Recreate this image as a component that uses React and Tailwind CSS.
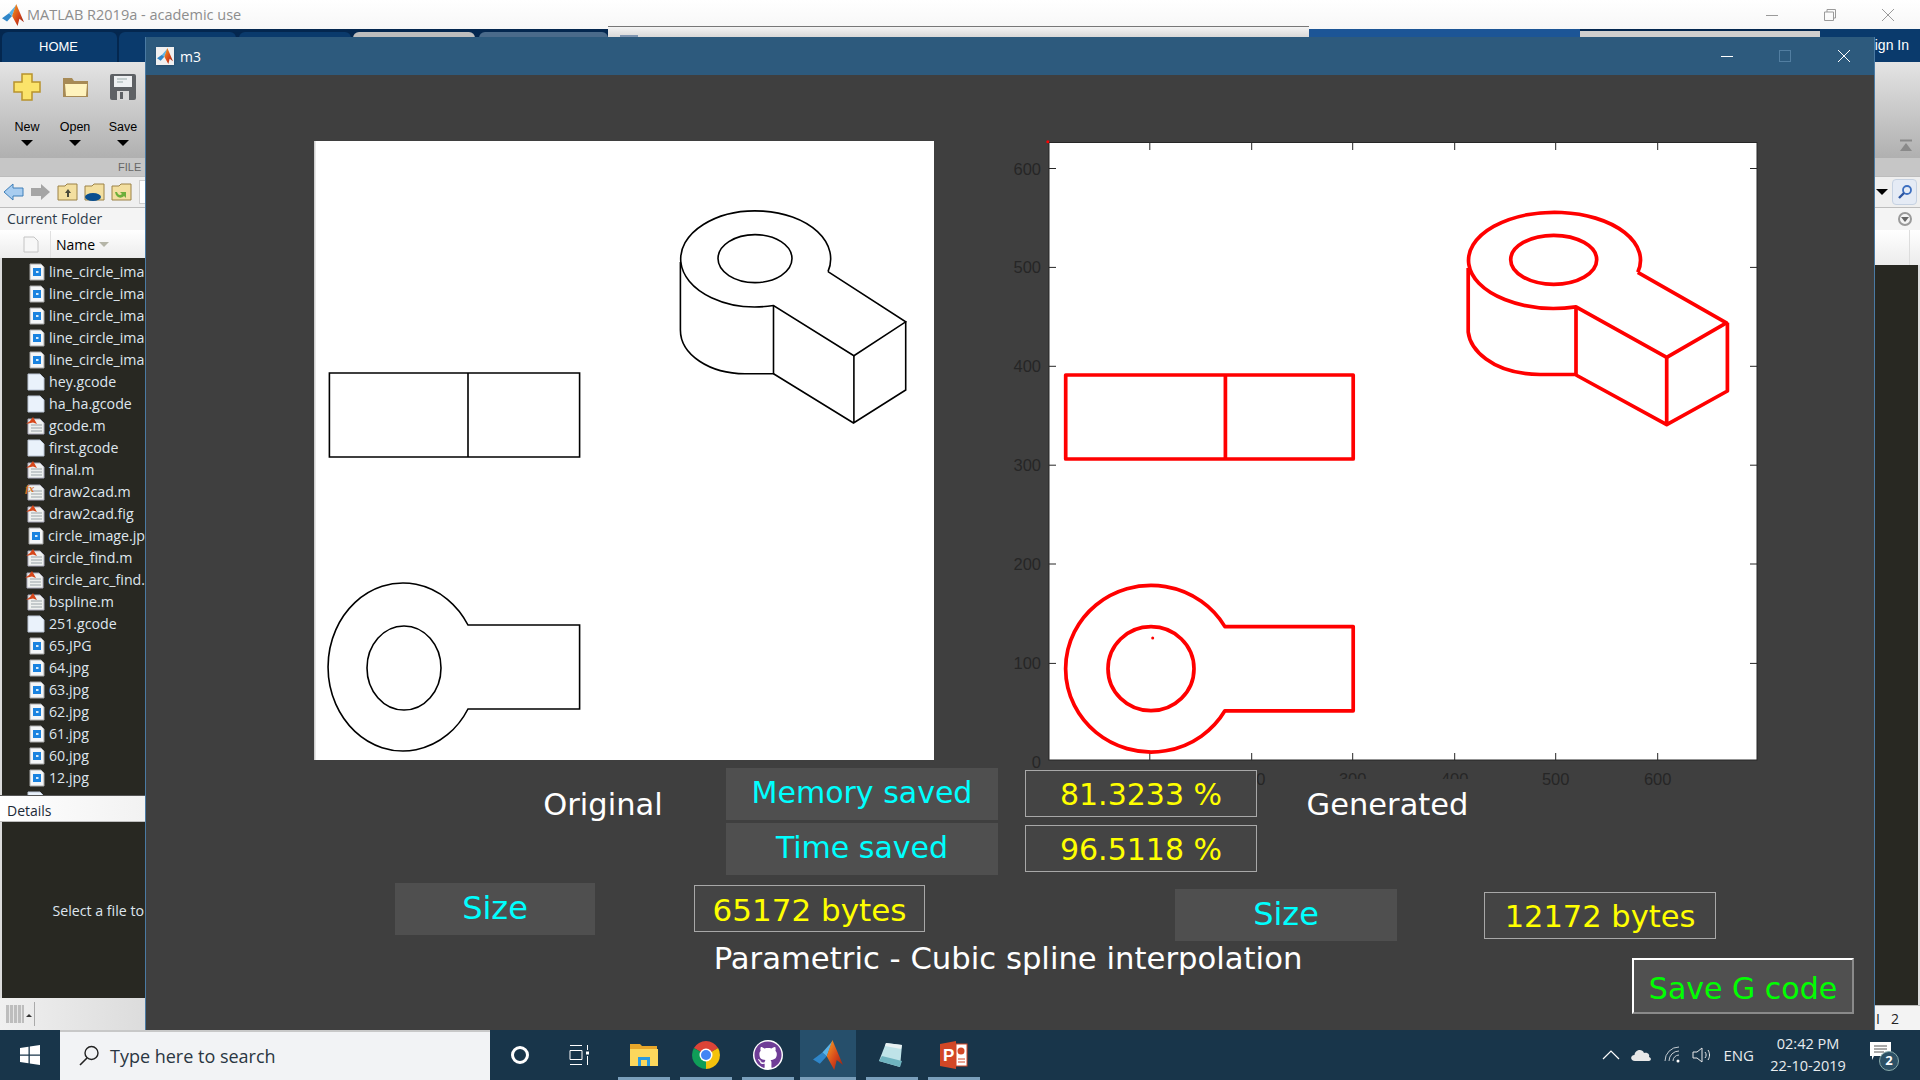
import React from "react";
import { FaGithub } from "react-icons/fa";

const comic = "font-['Comic_Sans_MS','DejaVu_Sans',cursive]";
const segoe = "font-['Open_Sans','Noto_Sans',sans-serif]";
const arial = "font-['Liberation_Sans',Arial,sans-serif]";

function MatlabLogo({ size = 24, id = "mlg" }) {
  return (
    <svg width={size} height={size} viewBox="0 0 24 24">
      <defs>
        <linearGradient id={id} x1="0" y1="0" x2="1" y2="1">
          <stop offset="0" stopColor="#f5a524" />
          <stop offset="0.55" stopColor="#d6461a" />
          <stop offset="1" stopColor="#8c1f12" />
        </linearGradient>
      </defs>
      <polygon points="0,15.5 7.5,10 11,13 5.5,19" fill="#2f86c9" />
      <polygon points="7.5,10 11,13 15.5,1" fill="#5ab4e8" />
      <polygon points="15.5,0 24,20 19,16 17,24 11,13" fill={`url(#${id})`} />
    </svg>
  );
}

function ImgIcon() {
  return (
    <svg width="16" height="18" viewBox="0 0 16 18">
      <path d="M1 1H12L15 4V17H1Z" fill="#f4f6f8" stroke="#a9a9a9" />
      <rect x="4" y="5" width="8" height="8" fill="#1a83e0" />
      <rect x="7" y="8" width="2.5" height="2" fill="#d8ecfb" />
    </svg>
  );
}
function DocIcon() {
  return (
    <svg width="18" height="18" viewBox="0 0 18 18">
      <path d="M1 1H13L17 5V17H1Z" fill="#eaf2fb" stroke="#bcc6d6" />
    </svg>
  );
}
function MIcon({ fx }) {
  return (
    <svg width="20" height="18" viewBox="0 0 20 18">
      <path d="M3 2H15L19 6V17H3Z" fill="#eef0ef" stroke="#aab" />
      <path d="M6 8H17M6 11H17M6 14H17" stroke="#9aa3a8" />
      {fx ? (
        <text x="0" y="9" fontSize="11" fontStyle="italic" fontWeight="700" fill="#d9731c" fontFamily="Liberation Serif">fx</text>
      ) : (
        <polygon points="1,7 5,4 8,0 12,7 8,5.5" fill="#d6461a" />
      )}
    </svg>
  );
}

const files = [
  ["line_circle_ima", "i"], ["line_circle_ima", "i"], ["line_circle_ima", "i"], ["line_circle_ima", "i"], ["line_circle_ima", "i"],
  ["hey.gcode", "d"], ["ha_ha.gcode", "d"], ["gcode.m", "m"], ["first.gcode", "d"], ["final.m", "m"],
  ["draw2cad.m", "f"], ["draw2cad.fig", "m"], ["circle_image.jp", "i"], ["circle_find.m", "m"], ["circle_arc_find.", "m"],
  ["bspline.m", "m"], ["251.gcode", "d"], ["65.JPG", "i"], ["64.jpg", "i"], ["63.jpg", "i"], ["62.jpg", "i"],
  ["61.jpg", "i"], ["60.jpg", "i"], ["12.jpg", "i"],
];

function FileRow({ name, t }) {
  return (
    <div className="flex h-[22px] shrink-0 items-center">
      <div className="flex w-[47px] justify-end pr-[4px]">
        {t === "i" && <ImgIcon />}
        {t === "d" && <DocIcon />}
        {t === "m" && <MIcon />}
        {t === "f" && <MIcon fx />}
      </div>
      <span className="whitespace-nowrap text-[14.2px] text-[#dfe6ee]">{name}</span>
    </div>
  );
}

function Caret() {
  return <div className="h-0 w-0 border-x-[6px] border-t-[6px] border-x-transparent border-t-black" />;
}

function RibbonBtn({ label, children, w }) {
  return (
    <div className={`flex flex-col items-center ${w}`}>
      <div className="flex h-[38px] items-center justify-center">{children}</div>
      <div className={`mt-[13px] text-[12.5px] leading-[16px] text-black ${arial}`}>{label}</div>
      <div className="mt-[5px]"><Caret /></div>
    </div>
  );
}

function LeftPanel() {
  return (
    <div className={`flex w-[145px] shrink-0 flex-col ${segoe}`}>
      <div className="flex h-[23px] items-center border-t border-[#bdbdbd] bg-[#f4f4f4] pb-[2px] pl-[7px] text-[14px] text-[#2d3b4a]">Current Folder</div>
      <div className="flex h-[28px] items-center bg-gradient-to-b from-[#ffffff] to-[#ececec]">
        <div className="flex w-[51px] justify-start border-r border-[#e0e0e0] py-[5px] pl-[23px]">
          <svg width="16" height="17" viewBox="0 0 16 17"><path d="M1 1H11L15 5V16H1Z" fill="#f7f7f7" stroke="#c4c4c4" /></svg>
        </div>
        <span className="ml-[5px] text-[14px] text-black">Name</span>
        <div className="ml-[4px] h-0 w-0 border-x-[5px] border-t-[5px] border-x-transparent border-t-[#b5b5a8]" />
      </div>
      <div className="flex h-[537px] flex-col overflow-hidden border-l-2 border-[#dcdcdc] bg-[#282822] pt-[3px]">
        {files.map((f, i) => <FileRow key={i} name={f[0]} t={f[1]} />)}
        <FileRow name="" t="d" />
      </div>
      <div className="flex h-[27px] items-center border-b border-t border-b-[#bdbdbd] border-t-[#555] bg-gradient-to-r from-[#ffffff] to-[#f2f2f2] pl-[7px] pt-[3px] text-[14px] text-[#1c2a38]">Details</div>
      <div className="flex h-[176px] items-center justify-end overflow-hidden whitespace-nowrap border-l-2 border-[#dcdcdc] bg-[#282822] pr-[1px] pt-[2px] text-[14.2px] text-[#dfe6ee]">Select a file to</div>
      <div className="flex h-[32px] items-center bg-gradient-to-r from-[#f0f0f0] to-[#dcdcdc] pl-[6px]">
        <div className="h-[18px] w-[18px] bg-[repeating-linear-gradient(90deg,#bdbdbd_0,#bdbdbd_3px,#e6e6e6_3px,#e6e6e6_4px)]" />
        <div className="ml-[2px] mt-[2px] h-0 w-0 border-x-[3px] border-b-[3px] border-x-transparent border-b-[#333]" />
        <div className="ml-[2px] h-[24px] w-px bg-[#aaa]" />
      </div>
    </div>
  );
}

function RightPanel() {
  return (
    <div className="flex w-[45px] shrink-0 flex-col">
      <div className="flex h-[23px] items-center justify-end border-t border-[#bdbdbd] bg-[#f4f4f4] pr-[8px]">
        <div className="flex h-[14px] w-[14px] items-center justify-center rounded-full border-2 border-[#9a9a9a]">
          <div className="h-0 w-0 border-x-[4px] border-t-[5px] border-x-transparent border-t-[#666]" />
        </div>
      </div>
      <div className="flex h-[35px] justify-end bg-gradient-to-b from-[#ffffff] to-[#ececec] pr-[10px]"><div className="h-full w-px bg-[#ddd]" /></div>
      <div className="h-[740px] border-r-2 border-[#dcdcdc] bg-[#282822]" />
      <div className={`flex h-[25px] items-center gap-[11px] border-t border-[#bbb] bg-[#f3f3f3] pl-[1px] text-[14px] text-[#222] ${segoe}`}>
        <span>I</span><span>2</span>
      </div>
    </div>
  );
}

function LeftDrawing() {
  return (
    <svg width="620" height="619" viewBox="314 141 620 619" className="block shrink-0 bg-white">
      <g fill="none" stroke="#000" strokeWidth="1.6">
        <path d="M329.4 373H579.6V457H329.4Z M468 373V457" />
        <path d="M579.6 625H468A75 84 0 1 0 468 709H579.6Z" />
        <ellipse cx="404" cy="668" rx="37" ry="42" />
        <path d="M828 271.6A75 48 0 1 0 773.5 305.5L853.9 355.7L905.7 321.8L828 271.6" />
        <ellipse cx="755" cy="258.6" rx="37" ry="24" />
        <path d="M680.4 262V330C680.4 355 710 373.7 745 373.7H773.5V305.5" />
        <path d="M773.5 373.7L853.5 423L905.7 390V321.8M853.9 355.7V423" />
      </g>
      <rect x="314" y="141" width="1.5" height="619" fill="#cfcfcf" />
    </svg>
  );
}

function Chart() {
  const xt = [[1149.8, ""], [1251.7, 200], [1352.7, 300], [1454.7, 400], [1555.7, 500], [1657.7, 600]];
  const yt = [[168.5, 600], [267.4, 500], [366.3, 400], [465.2, 300], [564, 200], [663.4, 100]];
  return (
    <svg width="770" height="660" viewBox="1005 135 770 660" className="block shrink-0">
      <rect x="1049" y="142.5" width="708" height="617.5" fill="#fff" />
      <rect x="1049" y="142.5" width="708" height="617.5" fill="none" stroke="#262626" strokeWidth="1" />
      {xt.map(([x, l]) => (
        <g key={x}>
          <path d={`M${x} 143V150M${x} 760V753`} stroke="#262626" />
          <text x={x} y="785" fontSize="16.5" textAnchor="middle" fill="#262626" fontFamily="Liberation Sans">{l}</text>
        </g>
      ))}
      {yt.map(([y, l]) => (
        <g key={l}>
          <path d={`M1049 ${y}H1056M1757 ${y}H1750`} stroke="#262626" />
          <text x="1041" y={y + 6} fontSize="16.5" textAnchor="end" fill="#262626" fontFamily="Liberation Sans">{l}</text>
        </g>
      ))}
      <text x="1041" y="768" fontSize="16.5" textAnchor="end" fill="#262626" fontFamily="Liberation Sans">0</text>
      <g fill="none" stroke="#f00" strokeWidth="3.7" strokeLinejoin="round">
        <path d="M1065.7 375H1353.2V459H1065.7Z M1225.4 375V459" />
        <path d="M1353.2 626.6H1224.9A85.5 83.3 0 1 0 1224.9 710.8H1353.2Z" />
        <ellipse cx="1151" cy="668.7" rx="43" ry="42" />
        <path d="M1637.8 272.3A86 48 0 1 0 1576 306.8L1666.7 357.3L1726.4 322.8L1637.8 272.3" />
        <ellipse cx="1553.7" cy="259.8" rx="43" ry="24.5" />
        <path d="M1468.2 268V332C1470 348 1490 374 1540 374.5H1576V306.8" />
        <path d="M1576 375L1666.7 424.6L1727.4 391V322.8M1666.7 357.3V424.6" />
      </g>
      <circle cx="1152.7" cy="638" r="1.5" fill="#f00" />
      <circle cx="1047.8" cy="141.8" r="1.5" fill="#f00" />
    </svg>
  );
}

function FigureWindow() {
  const base = `whitespace-nowrap leading-none ${comic}`;
  return (
    <div className="absolute left-[145px] top-[37px] flex h-[993px] w-[1730px] flex-col border-x border-[#4a7aa3] bg-[#3f3f3f]">
      <div className={`flex h-[38px] shrink-0 items-center bg-[#2d5a7d] ${segoe}`}>
        <div className="ml-[10px] flex h-[18px] w-[18px] items-center justify-center bg-[#f0f0f0] shadow-sm"><MatlabLogo size={16} id="mlg2" /></div>
        <span className="ml-[6px] text-[14px] text-white">m3</span>
        <div className="ml-auto flex items-center">
          <svg width="14" height="14" viewBox="0 0 14 14"><path d="M1 7.5H13" stroke="#fff" strokeWidth="1" /></svg>
          <svg className="ml-[44px]" width="14" height="14" viewBox="0 0 14 14"><rect x="1.5" y="1.5" width="11" height="11" fill="none" stroke="#527ea1" /></svg>
          <svg className="ml-[45px] mr-[23px]" width="14" height="14" viewBox="0 0 14 14"><path d="M1 1L13 13M13 1L1 13" stroke="#fff" strokeWidth="1" /></svg>
        </div>
      </div>

      <div className="mb-[-27px] flex shrink-0 items-start pt-[60px]">
        <div className="ml-[168px] mt-[6px]"><LeftDrawing /></div>
        <div className="ml-[71px]"><Chart /></div>
      </div>

      <div className="relative flex shrink-0 items-start">
        <div className="ml-[396px] mt-[22px] w-[122px] text-center text-white"><div className={`text-[30.5px] ${base}`}>Original</div></div>
        <div className="ml-[62px] flex w-[272px] flex-col gap-[3px]">
          <div className={`flex h-[52px] items-center justify-center bg-[#4f4f4f] pb-[2px] text-[30px] text-[#00ffff] ${base}`}>Memory saved</div>
          <div className={`flex h-[52px] items-center justify-center bg-[#4f4f4f] pb-[2px] text-[30px] text-[#00ffff] ${base}`}>Time saved</div>
        </div>
        <div className="ml-[27px] mt-[2px] flex w-[232px] flex-col gap-[8px]">
          <div className={`flex h-[47px] items-center justify-center border border-[#a8a8a8] bg-[#444444] pt-[2px] text-[30px] text-[#ffff00] ${base}`}>81.3233 %</div>
          <div className={`flex h-[47px] items-center justify-center border border-[#a8a8a8] bg-[#444444] pt-[2px] text-[30px] text-[#ffff00] ${base}`}>96.5118 %</div>
        </div>
        <div className={`ml-[33px] mt-[11px] flex h-[50px] w-[190px] items-center justify-center bg-[#3f3f3f] pl-[5px] pt-[2px] text-[30.5px] text-white ${base}`}>Generated</div>
      </div>

      <div className="relative mt-[8px] flex h-[58px] shrink-0 items-start">
        <div className={`ml-[249px] flex h-[52px] w-[200px] items-center justify-center bg-[#4f4f4f] pb-[3px] text-[32px] text-[#00ffff] ${base}`}>Size</div>
        <div className={`ml-[99px] mt-[2px] flex h-[47px] w-[231px] items-center justify-center border border-[#a8a8a8] bg-[#444444] pt-[3px] text-[31px] text-[#ffff00] ${base}`}>65172 bytes</div>
        <div className={`ml-[250px] mt-[6px] flex h-[52px] w-[222px] items-center justify-center bg-[#4f4f4f] pb-[3px] text-[32px] text-[#00ffff] ${base}`}>Size</div>
        <div className={`ml-[87px] mt-[9px] flex h-[47px] w-[232px] items-center justify-center border border-[#a8a8a8] bg-[#444444] pt-[4px] text-[30.5px] text-[#ffff00] ${base}`}>12172 bytes</div>
      </div>

      <div className="relative -mt-[3px] flex shrink-0 items-start">
        <div className={`ml-[568px] flex h-[40px] w-[588px] items-center justify-center pt-[2px] text-[30.7px] text-white ${base}`}>Parametric - Cubic spline interpolation</div>
        <div className={`ml-[330px] mt-[20px] flex h-[56px] w-[222px] items-center justify-center border-2 border-b-[#8a8a8a] border-l-white border-r-[#8a8a8a] border-t-white bg-[#505050] pt-[5px] text-[30px] text-[#00ff00] ${base}`}>Save G code</div>
      </div>
    </div>
  );
}

function Folder({ children }) {
  return (
    <svg width="22" height="20" viewBox="0 0 22 20">
      <path d="M1 4H8L10 2H20V18H1Z" fill="#f3dfa0" stroke="#9c8247" />
      {children}
    </svg>
  );
}

function Ribbon() {
  return (
    <div className="flex h-[115px] shrink-0 flex-col bg-gradient-to-b from-[#e4e4e4] to-[#a6a6a6]">
      <div className="flex h-[96px]">
        <div className="flex pl-[5px] pt-[6px]">
          <RibbonBtn label="New" w="w-[44px]">
            <svg width="30" height="30" viewBox="0 0 30 30"><path d="M10 2H20V10H28V20H20V28H10V20H2V10H10Z" fill="#fbe36a" stroke="#b8932c" strokeWidth="1.5" /></svg>
          </RibbonBtn>
          <RibbonBtn label="Open" w="w-[52px]">
            <svg width="30" height="28" viewBox="0 0 30 28"><path d="M3 5H12L14 8H28V24H3Z" fill="#a78a55" /><path d="M5 11H27L26 23H6Z" fill="#fff3bd" /></svg>
          </RibbonBtn>
          <RibbonBtn label="Save" w="w-[44px]">
            <svg width="28" height="28" viewBox="0 0 28 28"><rect x="1" y="1" width="26" height="26" rx="2" fill="#5e6165" /><rect x="5" y="3" width="18" height="11" fill="#eef0f2" /><path d="M8 6H18M8 9H14" stroke="#9aa" /><rect x="8" y="18" width="12" height="9" fill="#d8d8d8" /><rect x="11" y="19" width="3" height="7" fill="#5e6165" /></svg>
          </RibbonBtn>
        </div>
        <div className="ml-auto flex flex-col justify-end pb-[5px] pr-[7px]">
          <svg width="14" height="14" viewBox="0 0 14 14"><path d="M1 1.5H13" stroke="#8a8a8a" strokeWidth="2" /><path d="M7 4L13 12H1Z" fill="#8a8a8a" /></svg>
        </div>
      </div>
      <div className={`flex h-[19px] items-center border-b border-[#bdbdbd] bg-[#c6c6c6] pl-[118px] text-[11px] text-[#666] ${arial}`}>FILE</div>
    </div>
  );
}

function Toolbar() {
  return (
    <div className="flex h-[30px] shrink-0 items-center bg-[#efefef] pl-[3px]">
      <svg width="21" height="18" viewBox="0 0 21 18"><path d="M1 9L10 1V5H20V13H10V17Z" fill="#a8cdf0" stroke="#3f7fb8" /></svg>
      <svg className="ml-[6px]" width="21" height="18" viewBox="0 0 21 18"><path d="M20 9L11 1V5H1V13H11V17Z" fill="#a5a5a5" /></svg>
      <div className="ml-[6px]"><Folder><path d="M11 7L14 11H12V15H10V11H8Z" fill="#4a4a3a" /></Folder></div>
      <div className="ml-[5px]"><Folder><ellipse cx="9" cy="15" rx="8" ry="4" fill="#0a4f8f" /></Folder></div>
      <div className="ml-[5px]"><Folder><path d="M4 10C5 16 10 17 13 14L15 16V10H9L11 12C9 14 7 13 6 10Z" fill="#6caf3a" /></Folder></div>
      <div className="ml-[6px] h-[24px] w-[8px] border border-[#cfcfcf] bg-white" />
      <div className="ml-auto mr-[3px] flex items-center">
        <div className="mr-[4px]"><Caret /></div>
        <div className="flex h-[26px] w-[25px] items-center justify-center rounded-[4px] border border-[#c6d2e2] bg-[#e5ebf5]">
          <svg width="16" height="16" viewBox="0 0 16 16"><circle cx="10" cy="6" r="4" fill="none" stroke="#3d6fc0" strokeWidth="1.8" /><path d="M7 9L2 14" stroke="#2c55a0" strokeWidth="2.4" /></svg>
        </div>
      </div>
    </div>
  );
}

function Matlab() {
  return (
    <div className="flex min-h-0 flex-1 flex-col">
      <div className={`flex h-[29px] shrink-0 items-center bg-gradient-to-b from-white to-[#f7f7f7] pl-[2px] ${segoe}`}>
        <MatlabLogo size={22} id="mlg1" />
        <span className="ml-[3px] text-[14.5px] text-[#8d8d8d]">MATLAB R2019a - academic use</span>
        <div className="ml-auto flex items-center">
          <svg width="14" height="14" viewBox="0 0 14 14"><path d="M1 7.5H13" stroke="#9a9a9a" /></svg>
          <svg className="ml-[44px]" width="14" height="14" viewBox="0 0 14 14"><path d="M1.5 4H10.5V12.5H1.5ZM4 4V1.5H12.5V10H10.5" fill="none" stroke="#9a9a9a" /></svg>
          <svg className="ml-[44px] mr-[25px]" width="14" height="14" viewBox="0 0 14 14"><path d="M1 1L13 13M13 1L1 13" stroke="#9a9a9a" /></svg>
        </div>
      </div>
      <div className={`flex h-[33px] shrink-0 items-end bg-[#04274f] ${arial}`}>
        <div className="ml-[2px] flex h-[30px] w-[115px] items-center justify-center rounded-t-[6px] bg-[#0a3a6c] pr-[2px] text-[13px] text-white">HOME</div>
        <div className="ml-[2px] h-[30px] w-[117px] rounded-t-[6px] bg-[#0a3a6c]" />
        <div className="ml-[3px] h-[30px] w-[112px] rounded-t-[6px] bg-[#0a3a6c]" />
        <div className="ml-[2px] h-[30px] w-[122px] rounded-t-[6px] bg-[#bdbdbd]" />
        <div className="ml-[4px] h-[30px] w-[129px] rounded-t-[6px] bg-[#4a6a8a]" />
        <div className="h-[33px] w-[972px] bg-[#1c5596]" />
        <div className="h-[31px] w-[240px] bg-[#cfcfcf]" />
        <div className="flex h-[33px] flex-1 items-center justify-end bg-[#0a3a6c] pr-[11px] text-[14px] text-white">Sign In</div>
      </div>
      <Ribbon />
      <Toolbar />
      <div className="flex min-h-0 flex-1 justify-between">
        <LeftPanel />
        <RightPanel />
      </div>
    </div>
  );
}

function TaskIcon({ children, active, w = "w-[62px]" }) {
  return (
    <div className={`relative flex h-full items-center justify-center ${w} ${active ? "bg-[#264f6b]" : ""}`}>
      {children}
      <div className={`absolute bottom-0 h-[3px] bg-[#7a9fbb] ${active ? "inset-x-0" : "inset-x-[5px]"}`} />
    </div>
  );
}

function Taskbar() {
  return (
    <div className={`flex h-[50px] shrink-0 items-center bg-[#18354a] text-white ${segoe}`}>
      <div className="flex w-[60px] items-center justify-center">
        <svg width="20" height="20" viewBox="0 0 20 20"><path d="M0 3L8.5 1.8V9.5H0ZM9.8 1.6L20 0V9.5H9.8ZM0 10.8H8.5V18.3L0 17ZM9.8 10.8H20V20L9.8 18.5Z" fill="#fff" /></svg>
      </div>
      <div className="flex h-full w-[430px] items-center border-t-2 border-[#c8c8c8] bg-[#f2f3f5] pl-[17px]">
        <svg width="24" height="24" viewBox="0 0 24 24"><circle cx="14.5" cy="9" r="6.5" fill="none" stroke="#222" strokeWidth="1.4" /><path d="M10 14L3 21" stroke="#222" strokeWidth="1.6" /></svg>
        <span className="ml-[9px] text-[18px] text-[#2a3642]">Type here to search</span>
      </div>
      <div className="flex h-full w-[59px] items-center justify-center">
        <div className="h-[18px] w-[18px] rounded-full border-[3px] border-white" />
      </div>
      <div className="flex h-full w-[61px] items-center justify-center">
        <svg width="22" height="20" viewBox="0 0 22 20"><path d="M1 .5H13M1 19.5H13M1 5.5H13V14.5H1ZM18.5 0V5M18.5 11V20" stroke="#fff" fill="none" /><rect x="17" y="6.5" width="3" height="3" fill="#fff" /></svg>
      </div>
      <div className="ml-[3px] flex h-full items-center">
        <TaskIcon>
          <svg width="28" height="26" viewBox="0 0 28 26"><path d="M0 2H10L12 4H27V24H0Z" fill="#e8a72a" /><path d="M0 7H28V24H0Z" fill="#fcd75c" /><path d="M8 24V15H20V24H17V18H11V24Z" fill="#2a9ae0" /></svg>
        </TaskIcon>
        <TaskIcon>
          <svg width="28" height="28" viewBox="0 0 28 28">
            <path d="M14 14L1.9 7A14 14 0 0 1 26.1 7Z" fill="#db4437" />
            <path d="M14 14L1.9 7A14 14 0 0 0 14 28Z" fill="#0f9d58" />
            <path d="M14 14L26.1 7A14 14 0 0 1 14 28Z" fill="#f4c20d" />
            <circle cx="14" cy="14" r="6.5" fill="#fff" /><circle cx="14" cy="14" r="5" fill="#4285f4" />
          </svg>
        </TaskIcon>
        <TaskIcon>
          <div className="flex h-[30px] w-[30px] items-center justify-center rounded-full bg-white">
            <FaGithub size={28} color="#6f3d97" />
          </div>
        </TaskIcon>
        <div className="ml-[1px]" />
        <TaskIcon active w="w-[56px]"><MatlabLogo size={30} id="mlg3" /></TaskIcon>
        <div className="h-full w-[5px]" />
        <TaskIcon>
          <svg width="28" height="28" viewBox="0 0 28 28"><path d="M8 2L24 4L22 26L1 20Z" fill="#bfe3e8" /><path d="M8 2L24 4L23 8L7 5Z" fill="#e9f1f2" /><path d="M1 20L22 26L24 20L4 15Z" fill="#6fb4c0" /></svg>
        </TaskIcon>
        <TaskIcon>
          <svg width="28" height="28" viewBox="0 0 28 28">
            <path d="M16 0V28L0 25V3Z" fill="#d24726" />
            <rect x="16" y="3" width="11" height="22" fill="#fff" stroke="#d24726" />
            <path d="M18 18H25M18 21H25" stroke="#d24726" />
            <circle cx="21" cy="10" r="3.5" fill="#d24726" />
            <text x="3" y="20" fontSize="17" fontWeight="700" fill="#fff" fontFamily="Liberation Sans">P</text>
          </svg>
        </TaskIcon>
      </div>
      <div className="ml-auto flex h-full items-center">
        <svg width="20" height="12" viewBox="0 0 20 12"><path d="M2 10L10 2L18 10" fill="none" stroke="#fff" strokeWidth="1.2" /></svg>
        <svg className="ml-[9px]" width="22" height="14" viewBox="0 0 22 14"><path d="M5 13C0 13 0 7 4.5 7C5 2 12 0 14 5C18 4 20 7 19 9C22 10 21 13 19 13Z" fill="#e8e8e8" /></svg>
        <svg className="ml-[12px]" width="18" height="18" viewBox="0 0 18 18"><path d="M1 15A14 14 0 0 1 15 1M5 15A10 10 0 0 1 15 5M9 15A6 6 0 0 1 15 9" fill="none" stroke="#c4ccd2" /><circle cx="14" cy="15" r="1.5" fill="#fff" /></svg>
        <svg className="ml-[10px]" width="20" height="18" viewBox="0 0 20 18"><path d="M1 6H5L10 2V16L5 12H1ZM13 6C14.5 8 14.5 10 13 12M16 4C18 7 18 11 16 14" fill="none" stroke="#e8e8e8" /></svg>
        <span className="ml-[11px] text-[15px] text-[#e8ecef]">ENG</span>
        <div className="ml-[16px] flex w-[76px] flex-col items-center text-[14.5px] leading-[22px] text-[#e8ecef]">
          <span>02:42 PM</span>
          <span className="whitespace-nowrap">22-10-2019</span>
        </div>
        <div className="relative ml-[24px] mr-[30px] h-[26px] w-[20px]">
          <svg width="21" height="18" viewBox="0 0 21 18" className="absolute left-0 top-0"><path d="M0 0H21V14H4L2 18V14H0Z" fill="#fff" /><path d="M4 4H17M4 7H17M4 10H14" stroke="#555" /></svg>
          <div className="absolute left-[9px] top-[9px] flex h-[20px] w-[20px] items-center justify-center rounded-full border border-[#8aa] bg-[#2d5166] text-[13px] font-bold text-white">2</div>
        </div>
      </div>
    </div>
  );
}

export default function App() {
  return (
    <div className="relative flex h-[1080px] w-[1920px] flex-col overflow-hidden bg-white">
      <Matlab />
      <div className="absolute left-[608px] top-[26px] h-[11px] w-[701px] border-t border-[#777] bg-gradient-to-b from-[#f4f4f4] to-[#d8d8d8]">
        <div className="ml-[12px] mt-[8px] h-[3px] w-[18px] bg-[#7f95b0]" />
      </div>
      <FigureWindow />
      <Taskbar />
    </div>
  );
}
